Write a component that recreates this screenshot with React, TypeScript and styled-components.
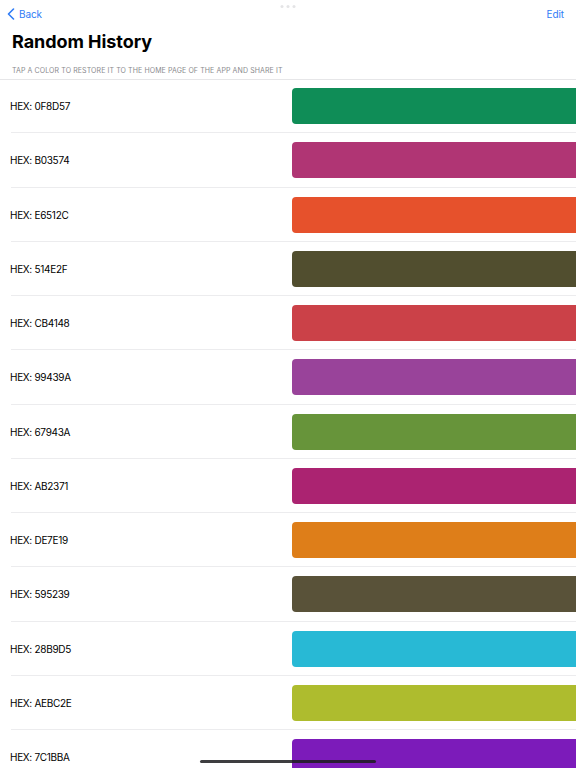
import React from "react";
import styled, { createGlobalStyle } from "styled-components";

const GlobalStyle = createGlobalStyle`
  html, body { margin: 0; padding: 0; background: #ffffff; }
  body { font-family: Inter, "Liberation Sans", Arial, sans-serif; -webkit-font-smoothing: antialiased; }
  * { box-sizing: border-box; }
`;

const Page = styled.div`
  position: relative;
  width: 576px;
  height: 768px;
  overflow: hidden;
  background: #ffffff;
`;

const NavBar = styled.div`
  position: relative;
  height: 28px;
  display: flex;
  align-items: center;
  justify-content: space-between;
  padding: 0 12px 0 7px;
`;

const NavButton = styled.button`
  display: flex;
  align-items: center;
  gap: 4px;
  border: 0;
  background: none;
  padding: 0;
  color: #2f7cf6;
  font-family: inherit;
  font-size: 10px;
  letter-spacing: -0.1px;
  cursor: pointer;
`;

const Grabber = styled.div`
  position: absolute;
  top: 5px;
  left: 50%;
  transform: translateX(-50%);
  display: flex;
  gap: 3px;
`;

const Dot = styled.span`
  width: 3px;
  height: 3px;
  border-radius: 50%;
  background: #e4e4e6;
`;

const Title = styled.h1`
  margin: 0;
  padding: 0 12px;
  height: 28px;
  line-height: 28px;
  font-size: 18px;
  font-weight: 700;
  color: #000000;
  letter-spacing: -0.05px;
`;

const Subtitle = styled.div`
  height: 24px;
  padding: 8px 12px 0;
  line-height: 14px;
  font-size: 7px;
  color: #8a8a8e;
  text-transform: uppercase;
  letter-spacing: 0.1px;
  border-bottom: 1px solid #e6e6e8;
`;

const List = styled.ul`
  margin: 0;
  padding: 0;
  list-style: none;
`;

const Row = styled.li`
  position: relative;
  height: 54.25px;
  display: flex;
  align-items: center;
  justify-content: space-between;
  padding-left: 10px;
  padding-bottom: 2px;
  cursor: pointer;
  &::after {
    content: "";
    position: absolute;
    left: 11px;
    right: 0;
    bottom: 1px;
    height: 1px;
    background: #ececee;
  }
`;

const HexLabel = styled.span`
  font-size: 10px;
  letter-spacing: -0.3px;
  color: #000000;
`;

const Swatch = styled.div<{ $color: string }>`
  width: 284px;
  height: 36px;
  border-radius: 4px 0 0 4px;
  background: ${(p) => p.$color};
`;

const HomeIndicator = styled.div`
  position: absolute;
  left: 200px;
  bottom: 5px;
  width: 176px;
  height: 3px;
  border-radius: 2px;
  background: #1c1c1e;
  opacity: 0.85;
`;

const colors = [
  "0F8D57",
  "B03574",
  "E6512C",
  "514E2F",
  "CB4148",
  "99439A",
  "67943A",
  "AB2371",
  "DE7E19",
  "595239",
  "28B9D5",
  "AEBC2E",
  "7C1BBA",
];

export default function App() {
  return (
    <Page>
      <GlobalStyle />
      <NavBar>
        <NavButton>
          <svg width="8" height="12" viewBox="0 0 8 12" fill="none">
            <path d="M6.5 1 L1.5 6 L6.5 11" stroke="#2f7cf6" strokeWidth="1.6" strokeLinecap="round" strokeLinejoin="round" />
          </svg>
          Back
        </NavButton>
        <Grabber>
          <Dot />
          <Dot />
          <Dot />
        </Grabber>
        <NavButton>Edit</NavButton>
      </NavBar>
      <Title>Random History</Title>
      <Subtitle>Tap a color to restore it to the home page of the app and share it</Subtitle>
      <List>
        {colors.map((c) => (
          <Row key={c}>
            <HexLabel>HEX: {c}</HexLabel>
            <Swatch $color={`#${c}`} />
          </Row>
        ))}
      </List>
      <HomeIndicator />
    </Page>
  );
}
